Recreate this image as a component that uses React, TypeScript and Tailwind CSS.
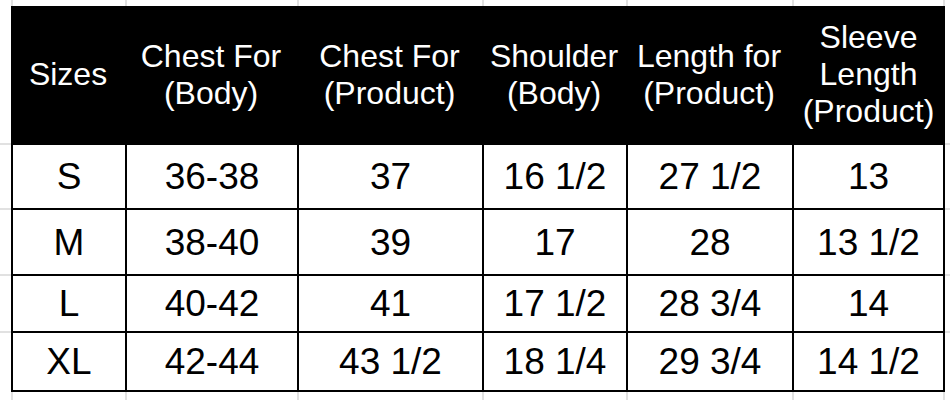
import React from 'react';

const headers: string[][] = [
  ['Sizes'],
  ['Chest For', '(Body)'],
  ['Chest For', '(Product)'],
  ['Shoulder', '(Body)'],
  ['Length for', '(Product)'],
  ['Sleeve', 'Length', '(Product)'],
];

const rows: string[][] = [
  ['S', '36-38', '37', '16 1/2', '27 1/2', '13'],
  ['M', '38-40', '39', '17', '28', '13 1/2'],
  ['L', '40-42', '41', '17 1/2', '28 3/4', '14'],
  ['XL', '42-44', '43 1/2', '18 1/4', '29 3/4', '14 1/2'],
];

const font = { fontFamily: '"Liberation Sans", Arial, sans-serif' };

export default function App() {
  // 8 columns: left gutter, 6 table columns, right gutter
  // 7 rows: top gutter, header, 4 data rows, bottom gutter
  const cells: React.ReactNode[] = [];

  // top gutter
  for (let c = 0; c < 8; c++) {
    cells.push(
      <div
        key={`t${c}`}
        className={
          (c >= 1 && c <= 6 ? 'border-l-2 border-[#e1e1e1] ' : '') +
          (c === 6 ? 'border-r-2 border-[#e1e1e1]' : '')
        }
      />
    );
  }

  // header row
  cells.push(<div key="hl" />);
  headers.forEach((h, i) => {
    cells.push(
      <div
        key={`h${i}`}
        className="flex flex-col items-center justify-center bg-black text-white text-[32px] leading-[37px] whitespace-nowrap"
      >
        {h.map((line) => (
          <span key={line}>{line}</span>
        ))}
      </div>
    );
  });
  cells.push(<div key="hr" />);

  // data rows
  rows.forEach((r, ri) => {
    const last = ri === rows.length - 1;
    cells.push(<div key={`l${ri}`} className="border-t-2 border-[#e1e1e1]" />);
    r.forEach((v, ci) => {
      cells.push(
        <div
          key={`c${ri}-${ci}`}
          className={
            'flex items-center justify-center border-t-2 border-l-2 border-black text-black text-[37px] leading-none' +
            (ci === 5 ? ' border-r-2' : '') +
            (last ? ' border-b-2' : '')
          }
        >
          {v}
        </div>
      );
    });
    cells.push(<div key={`r${ri}`} className="border-t-2 border-[#e1e1e1]" />);
  });

  // bottom gutter
  for (let c = 0; c < 8; c++) {
    cells.push(
      <div
        key={`b${c}`}
        className={
          (c >= 1 && c <= 6 ? 'border-l-2 border-[#e1e1e1] ' : '') +
          (c === 6 ? 'border-r-2 border-[#e1e1e1]' : '')
        }
      />
    );
  }

  return (
    <div
      className="w-[950px] h-[400px] overflow-hidden bg-white grid grid-cols-[11px_114px_172px_185px_144px_166px_153px_1fr] grid-rows-[6px_137px_65px_66px_57px_61px_1fr]"
      style={font}
    >
      {cells}
    </div>
  );
}
